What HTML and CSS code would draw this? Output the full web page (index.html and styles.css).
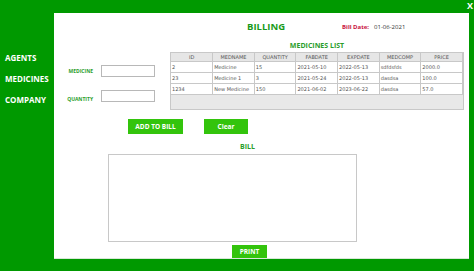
FILE: index.html
```html
<!DOCTYPE html>
<html lang="en">
<head>
    <meta charset="UTF-8">
    <title>Billing</title>
    <link rel="stylesheet" href="styles.css">
</head>
<body>
    <div class="topbar">
        <span class="close">X</span>
    </div>
    <div class="main">
        <div class="sidebar">
            <div class="nav-item">AGENTS</div>
            <div class="nav-item">MEDICINES</div>
            <div class="nav-item">COMPANY</div>
        </div>
        <div class="panel">
            <div class="header">
                <h1 class="title">BILLING</h1>
                <span class="date-label">Bill Date:</span>
                <span class="date-value">01-06-2021</span>
            </div>
            <div class="middle">
                <div class="form">
                    <div class="field">
                        <label class="field-label">MEDICINE</label>
                        <input type="text" class="field-input">
                    </div>
                    <div class="field">
                        <label class="field-label">QUANTITY</label>
                        <input type="text" class="field-input">
                    </div>
                </div>
                <div class="list">
                    <div class="list-title">MEDICINES LIST</div>
                    <div class="table-wrap">
                        <table class="med-table">
                            <thead>
                                <tr>
                                    <th>ID</th><th>MEDNAME</th><th>QUANTITY</th><th>FABDATE</th><th>EXPDATE</th><th>MEDCOMP</th><th>PRICE</th>
                                </tr>
                            </thead>
                            <tbody>
                                <tr><td>2</td><td>Medicine</td><td>15</td><td>2021-05-10</td><td>2022-05-13</td><td>sdfdsfds</td><td>2000.0</td></tr>
                                <tr><td>23</td><td>Medicine 1</td><td>3</td><td>2021-05-24</td><td>2022-05-13</td><td>dasdsa</td><td>100.0</td></tr>
                                <tr><td>1234</td><td>New Medicine</td><td>150</td><td>2021-06-02</td><td>2023-06-22</td><td>dasdsa</td><td>57.0</td></tr>
                            </tbody>
                        </table>
                    </div>
                </div>
            </div>
            <div class="actions">
                <button class="btn btn-add">ADD TO BILL</button>
                <button class="btn btn-clear">Clear</button>
            </div>
            <div class="bill-title">BILL</div>
            <textarea class="bill-area"></textarea>
            <div class="print-row">
                <button class="btn btn-print">PRINT</button>
            </div>
        </div>
    </div>
</body>
</html>
```

FILE: styles.css
```css
body {
    margin: 0;
    width: 474px;
    height: 271px;
    background-color: #009900;
    font-family: "Open Sans", "DejaVu Sans", sans-serif;
    overflow: hidden;
}
.topbar {
    height: 13px;
    display: flex;
    justify-content: flex-end;
}
.close {
    color: white;
    font-weight: bold;
    font-size: 9px;
    line-height: 12px;
    margin-right: 1px;
}
.main {
    display: flex;
}
.sidebar {
    width: 54px;
    padding-top: 38px;
}
.nav-item {
    color: white;
    font-weight: bold;
    font-size: 8px;
    margin-left: 5px;
    height: 21px;
    line-height: 14px;
}
.panel {
    width: 415px;
    height: 246px;
    background-color: white;
    box-sizing: border-box;
    border-bottom: 1px solid #d8e8d8;
}
.header {
    display: flex;
    align-items: center;
    height: 26px;
}
.title {
    margin: 0 0 0 193px;
    font-size: 9.5px;
    color: #1a9a1a;
    font-weight: bold;
}
.date-label {
    margin-left: 57px;
    font-size: 6px;
    font-weight: bold;
    color: #c8103c;
    padding-top: 2px;
}
.date-value {
    margin-left: 5px;
    font-size: 6px;
    color: #333;
    padding-top: 2px;
}
.middle {
    display: flex;
}
.form {
    width: 116px;
    padding-top: 26px;
}
.field {
    display: flex;
    align-items: center;
    height: 12px;
}
.field + .field {
    margin-top: 13px;
}
.field-label {
    width: 39px;
    margin-right: 8px;
    text-align: right;
    font-size: 5px;
    font-weight: bold;
    color: #2a9d2a;
}
.field-input {
    width: 54px;
    height: 12px;
    box-sizing: border-box;
    border: 1px solid #b8b8b8;
    padding: 0;
    margin: 0;
}
.field + .field .field-label {
    padding-top: 6px;
}
.list {
    width: 294px;
}
.list-title {
    text-align: center;
    font-size: 7px;
    font-weight: bold;
    color: #2a9d2a;
    height: 13px;
    line-height: 13px;
}
.table-wrap {
    height: 58px;
    background-color: #e8e8e8;
    border: 1px solid #c8c8c8;
    box-sizing: border-box;
}
.med-table {
    width: 100%;
    border-collapse: collapse;
    table-layout: fixed;
    font-family: "DejaVu Sans", sans-serif;
    font-size: 5px;
    color: #555;
}
.med-table th {
    background-color: #e6e6e6;
    font-weight: normal;
    height: 8px;
    border-right: 1px solid #c8c8c8;
    border-bottom: 1px solid #c8c8c8;
    padding: 0;
}
.med-table td {
    background-color: white;
    height: 10px;
    padding: 0 1px;
    border-right: 1px solid #c8c8c8;
    border-bottom: 1px solid #c8c8c8;
    white-space: nowrap;
    overflow: hidden;
}
.actions {
    display: flex;
    gap: 21px;
    padding-left: 74px;
    margin-top: 9px;
}
.btn {
    background-color: #33c40c;
    color: white;
    border: none;
    font-family: "Open Sans", sans-serif;
    font-weight: bold;
    font-size: 6.5px;
    padding: 0;
    height: 15px;
}
.btn-add {
    width: 55px;
}
.btn-clear {
    width: 44px;
}
.bill-title {
    margin: 8px 0 0 186px;
    font-size: 7px;
    font-weight: bold;
    color: #2a9d2a;
    height: 11px;
}
.bill-area {
    display: block;
    margin: 1px 0 0 54px;
    width: 249px;
    height: 88px;
    box-sizing: border-box;
    border: 1px solid #c8c8c8;
    resize: none;
    padding: 0;
}
.print-row {
    display: flex;
    padding: 3px 0 0 178px;
}
.btn-print {
    width: 35px;
    height: 13px;
}
```
